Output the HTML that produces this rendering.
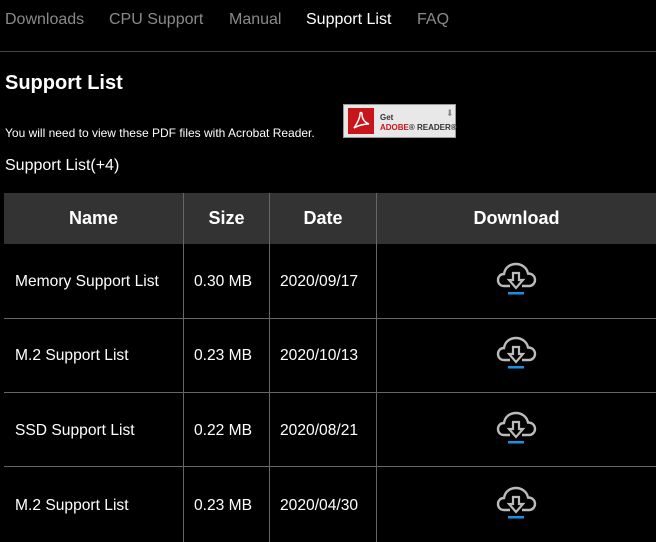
<!DOCTYPE html>
<html><head><meta charset="utf-8"><style>
*{margin:0;padding:0;box-sizing:border-box}
body{width:656px;height:542px;background:#000;color:#fff;font-family:"Liberation Sans",Arial,sans-serif;position:relative;overflow:hidden}
.a{position:absolute;white-space:nowrap}
.nav{font-size:16px;color:#8a8a8a;top:11px}
.hline{position:absolute;left:0;width:656px;height:1px;background:#444}
.vline{position:absolute;width:1px;background:#666;top:193px;height:349px}
.rline{position:absolute;left:4px;width:652px;height:1px;background:#666}
.cell{position:absolute;font-size:15.6px;color:#fff}
.th{position:absolute;font-size:18px;font-weight:bold;top:208px}
</style></head><body>
<div class="a nav" style="left:5px">Downloads</div>
<div class="a nav" style="left:109px">CPU Support</div>
<div class="a nav" style="left:229px">Manual</div>
<div class="a nav" style="left:306px;color:#fff">Support List</div>
<div class="a nav" style="left:417px">FAQ</div>
<div class="hline" style="top:51px"></div>

<div class="a" style="left:5px;top:72px;font-size:20px;font-weight:bold">Support List</div>
<div class="a" style="left:5px;top:126px;font-size:12px">You will need to view these PDF files with Acrobat Reader.</div>
<div class="a" style="left:343px;top:104px;width:113px;height:34px;background:#e8e8e8;border:1px solid #999">
  <div class="a" style="left:4px;top:3px;width:26px;height:26px;background:#c8141b"></div>
  <svg class="a" style="left:6px;top:5px" width="22" height="22" viewBox="0 0 22 22"><path d="M4 18 C8 12 10 8 10 4 C10 2 12 2 12 4 C12 8 14 12 19 14 C15 14 9 15 4 18 Z" fill="none" stroke="#fff" stroke-width="1.5"/></svg>
  <div class="a" style="left:36px;top:8px;font-size:8px;color:#333;font-weight:bold">Get</div>
  <div class="a" style="left:36px;top:18px;font-size:8px;color:#c8141b;font-weight:bold">ADOBE<span style="color:#333">® READER®</span></div>
  <div class="a" style="left:102px;top:3px;font-size:9px;color:#888">⬇</div>
</div>
<div class="a" style="left:5px;top:157px;font-size:16px">Support List(+4)</div>

<div class="a" style="left:4px;top:193px;width:652px;height:51px;background:#333"></div>
<div class="vline" style="left:183px"></div>
<div class="vline" style="left:269px"></div>
<div class="vline" style="left:376px"></div>
<div class="th" style="left:4px;width:179px;text-align:center">Name</div>
<div class="th" style="left:184px;width:85px;text-align:center">Size</div>
<div class="th" style="left:270px;width:106px;text-align:center">Date</div>
<div class="th" style="left:377px;width:279px;text-align:center">Download</div>

<div class="rline" style="top:318px"></div>
<div class="rline" style="top:392px"></div>
<div class="rline" style="top:466px"></div>

<div class="cell" style="left:15px;top:273px">Memory Support List</div>
<div class="cell" style="left:194px;top:273px">0.30 MB</div>
<div class="cell" style="left:280px;top:273px">2020/09/17</div>
<div class="cell" style="left:15px;top:347px">M.2 Support List</div>
<div class="cell" style="left:194px;top:347px">0.23 MB</div>
<div class="cell" style="left:280px;top:347px">2020/10/13</div>
<div class="cell" style="left:15px;top:422px">SSD Support List</div>
<div class="cell" style="left:194px;top:422px">0.22 MB</div>
<div class="cell" style="left:280px;top:422px">2020/08/21</div>
<div class="cell" style="left:15px;top:497px">M.2 Support List</div>
<div class="cell" style="left:194px;top:497px">0.23 MB</div>
<div class="cell" style="left:280px;top:497px">2020/04/30</div>

<svg class="a" style="left:0;top:0" width="656" height="542">
<defs><g id="ic">
<path d="M13 24 H7 C3 24 1 21 1 18 C1 14.5 3.5 12 7 12 C8 5.5 13 2 19 2 C25 2 30 6 31 11.5 C35 11.5 38 14 38 18 C38 21 35.5 24 32 24 H25" fill="none" stroke="#bbb" stroke-width="2.4"/>
<path d="M16 11 H22 V18 H26 L19 26 L12 18 H16 Z" fill="none" stroke="#bbb" stroke-width="2.2" stroke-linejoin="miter"/>
<rect x="11" y="30" width="16" height="2.5" fill="#1e8fe0"/>
</g></defs>
<use href="#ic" x="497" y="262"/>
<use href="#ic" x="497" y="336"/>
<use href="#ic" x="497" y="411"/>
<use href="#ic" x="497" y="486"/>
</svg>
</body></html>
